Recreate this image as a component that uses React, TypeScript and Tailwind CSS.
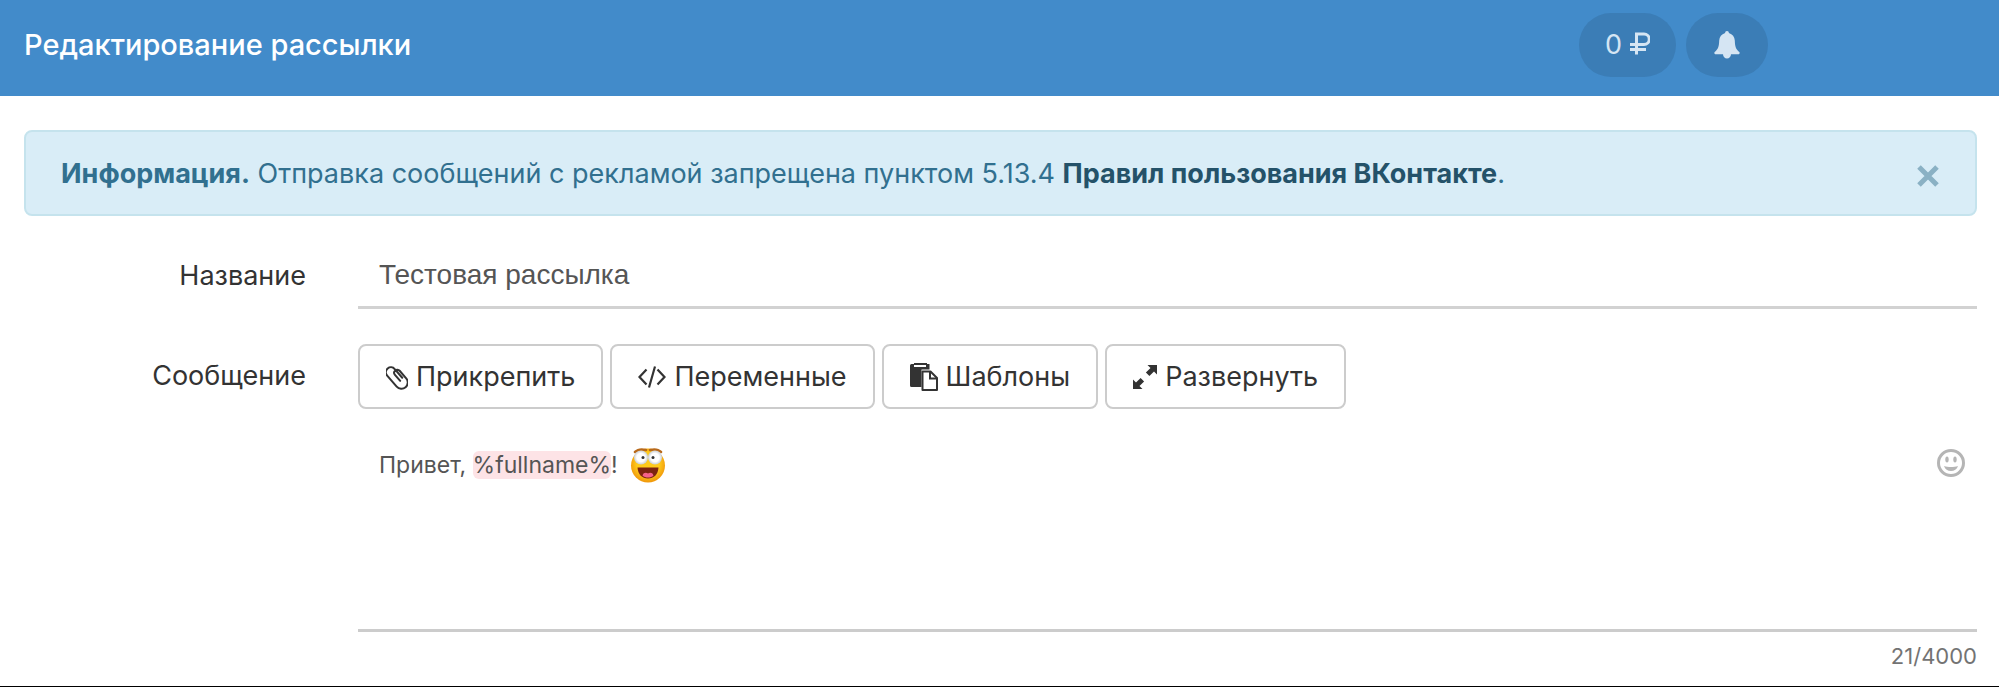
import { useState } from "react";

const font = "font-['Inter','Open_Sans',sans-serif]";

function IconBell() {
  return (
    <svg width="26" height="28" viewBox="0 0 26 28" fill="currentColor" aria-hidden="true">
      <path d="M13 0c1.200 0 1.900 0.900 1.900 1.900C18.500 3 20.600 5.800 20.800 9.500c0.200 6 1 8.500 4.500 11.500 0.600 0.600 0.500 2-0.500 2.200H17c-0.100 2.600-1.800 4.300-4 4.300s-3.900-1.700-4-4.300H1.200c-1-0.200-1.100-1.600-0.500-2.200 3.500-3 4.300-5.500 4.500-11.500C5.400 5.800 7.500 3 11.100 1.900 11.100 0.900 11.800 0 13 0z" />
    </svg>
  );
}

function IconRuble() {
  return (
    <svg width="20" height="26" viewBox="0 0 20 26" fill="none" stroke="currentColor" strokeWidth="3" aria-hidden="true">
      <path d="M6.500 22.500V2h7.500a5 5 0 0 1 0 10.500H0M0 17.500h16" />
    </svg>
  );
}

function IconPaperclip() {
  return (
    <svg width="22" height="26" viewBox="0 0 22 26" fill="none" stroke="currentColor" strokeWidth="2" strokeLinecap="round" aria-hidden="true">
      <path
        transform="translate(11 13) rotate(-41)"
        d="M3.500 4V-7.500a5 5 0 0 0-10 0V7a6.300 6.300 0 0 0 12.600 0V-3a3.100 3.100 0 0 0-6.200 0V5"
      />
    </svg>
  );
}

function IconCode() {
  return (
    <svg width="28" height="22" viewBox="0 0 28 22" fill="none" stroke="currentColor" strokeWidth="2.2" aria-hidden="true">
      <path d="M8.500 3.500L1.500 11l7 7.500M19.500 3.500l7 7.500-7 7.500M17 0.500l-6 21" />
    </svg>
  );
}

function IconPaste() {
  return (
    <svg width="28" height="28" viewBox="0 0 28 28" aria-hidden="true">
      <path fill="currentColor" d="M1.500 1H4V0h13v1h2.500v5.500h-8V24H1.500A1.500 1.500 0 0 1 0 22.500v-20A1.500 1.500 0 0 1 1.500 1z" />
      <path fill="#fff" d="M4 2h12v2H4z" />
      <path fill="#fff" stroke="currentColor" strokeWidth="2" strokeLinejoin="round" d="M12.500 8.500h8l6.500 6.500v12H12.500z" />
      <path fill="none" stroke="currentColor" strokeWidth="2" d="M20 8.500V15.500h7" />
    </svg>
  );
}

function IconExpand() {
  return (
    <svg width="24" height="24" viewBox="0 0 24 24" fill="currentColor" aria-hidden="true">
      <path d="M14.500 0H24v9.500l-3-3-4.600 4.600-3.500-3.500L17.500 3zM9.500 24H0v-9.500l3 3 4.600-4.600 3.500 3.500L6.500 21z" />
    </svg>
  );
}

function IconSmile() {
  return (
    <svg width="28" height="28" viewBox="0 0 28 28" fill="none" aria-hidden="true">
      <circle cx="14" cy="14" r="12.500" stroke="currentColor" strokeWidth="3" />
      <ellipse cx="10" cy="10.500" rx="1.700" ry="3" fill="currentColor" />
      <ellipse cx="18" cy="10.500" rx="1.700" ry="3" fill="currentColor" />
      <path fill="currentColor" d="M7 17c4 1.300 10 1.300 14 0-1 3.200-3.800 5-7 5s-6-1.800-7-5z" />
    </svg>
  );
}

function CrazyFace() {
  return (
    <svg className="mb-1 ml-3 inline-block" width="36" height="36" viewBox="0 0 36 36" role="img" aria-label="😀">
      <defs>
        <radialGradient id="face" cx="0.5" cy="0.45" r="0.55">
          <stop offset="0.6" stopColor="#ffcb1c" />
          <stop offset="1" stopColor="#f0960a" />
        </radialGradient>
        <radialGradient id="eye">
          <stop offset="0.6" stopColor="#fff" />
          <stop offset="1" stopColor="#c9cdd2" />
        </radialGradient>
      </defs>
      <circle cx="18" cy="18.500" r="17" fill="url(#face)" />
      <path d="M5 5C8 2 12 2 16 3M31 5C28 2 24 2 20 3" fill="none" stroke="#b8691a" strokeWidth="2.500" strokeLinecap="round" />
      <circle cx="11" cy="10.500" r="7" fill="url(#eye)" />
      <circle cx="25" cy="10.500" r="7" fill="url(#eye)" />
      <circle cx="13" cy="10.500" r="1.500" fill="#333" />
      <circle cx="23" cy="10.500" r="1.500" fill="#333" />
      <path d="M7.500 20.500h21c-0.500 7-4.500 11-10.500 11s-10-4-10.500-11z" fill="#7d2410" />
      <path d="M12.500 28.500c1-3.500 4-3 5.500-2 1.500-1 4.500-1.500 5.500 2-3 2.800-8 2.800-11 0z" fill="#f5638a" />
    </svg>
  );
}

const tools = [
  { label: "Прикрепить", icon: <IconPaperclip /> },
  { label: "Переменные", icon: <IconCode /> },
  { label: "Шаблоны", icon: <IconPaste /> },
  { label: "Развернуть", icon: <IconExpand /> },
];

export default function App() {
  const [name, setName] = useState("Тестовая рассылка");
  const [showAlert, setShowAlert] = useState(true);

  return (
    <div className={`${font} border-b border-black bg-white text-[27px] leading-10 text-[#333]`}>
      <header className="flex h-24 items-center bg-[#428bca] pl-6 pr-[231px] text-white">
        <h1 className="mr-auto pb-1.5 text-[29px] font-medium">Редактирование рассылки</h1>
        <div className="flex gap-2.5 pb-1.5 text-[#d5e5f3]">
          <button type="button" className="flex h-16 items-center gap-2 rounded-full bg-[#3b7db6] px-[26px]">
            0 <IconRuble />
          </button>
          <button
            type="button"
            aria-label="Уведомления"
            className="flex h-16 items-center rounded-full bg-[#3b7db6] px-7"
          >
            <IconBell />
          </button>
        </div>
      </header>

      <main className="pl-6 pr-[22px] pt-[34px]">
        {showAlert && (
          <div
            role="alert"
            className="flex items-center justify-between rounded-lg border-2 border-[#c5e3ed] bg-[#d9edf7] pb-5 pl-[35px] pr-9 pt-[22px] text-[#31708f]"
          >
            <p>
              <strong>Информация.</strong> Отправка сообщений с рекламой запрещена пунктом 5.13.4{" "}
              <a href="#rules" className="font-bold text-[#245269]">
                Правил пользования ВКонтакте
              </a>
              .
            </p>
            <button
              type="button"
              aria-label="Закрыть"
              onClick={() => setShowAlert(false)}
              className="pt-1 text-[#8ab1c4]"
            >
              <svg width="22" height="22" viewBox="0 0 22 22" stroke="currentColor" strokeWidth="5" aria-hidden="true">
                <path d="M2 2l18 18M20 2L2 20" />
              </svg>
            </button>
          </div>
        )}

        <form className="mt-[34px] grid grid-cols-[282px_1fr] gap-x-[52px]">
          <label htmlFor="mailing-name" className="pt-1.5 text-right">
            Название
          </label>
          <input
            id="mailing-name"
            type="text"
            value={name}
            onChange={(e) => setName(e.target.value)}
            className="h-[59px] w-full border-b-[3px] border-[#d2d2d2] px-[21px] pb-1.5 font-['Liberation_Sans',sans-serif] text-[28px] text-[#555] focus:outline-none"
          />

          <span id="mailing-message" className="pt-[47px] text-right">
            Сообщение
          </span>
          <div className="pt-[35px]">
            <div className="flex flex-wrap gap-[7px]">
              {tools.map((t) => (
                <button
                  key={t.label}
                  type="button"
                  className="flex h-[65px] items-center gap-2 rounded-lg border-2 border-[#ccc] px-[26px]"
                >
                  {t.icon}
                  {t.label}
                </button>
              ))}
            </div>
            <div className="mt-6 flex h-[199px] items-start justify-between border-b-[3px] border-[#ccc] pl-[21px] pr-3 pt-3 text-[23px] leading-10 text-[#555]">
              <div
                role="textbox"
                aria-labelledby="mailing-message"
                contentEditable
                suppressContentEditableWarning
                className="flex-1 focus:outline-none"
              >
                Привет, <span className="rounded-md bg-[#fde3e6]">%fullname%</span>!
                <CrazyFace />
              </div>
              <button type="button" aria-label="Смайлы" className="pt-1 text-[#b5b5b5]">
                <IconSmile />
              </button>
            </div>
            <p className="pb-2.5 pt-1 text-right text-[22px] text-[#737373]">21/4000</p>
          </div>
        </form>
      </main>
    </div>
  );
}
